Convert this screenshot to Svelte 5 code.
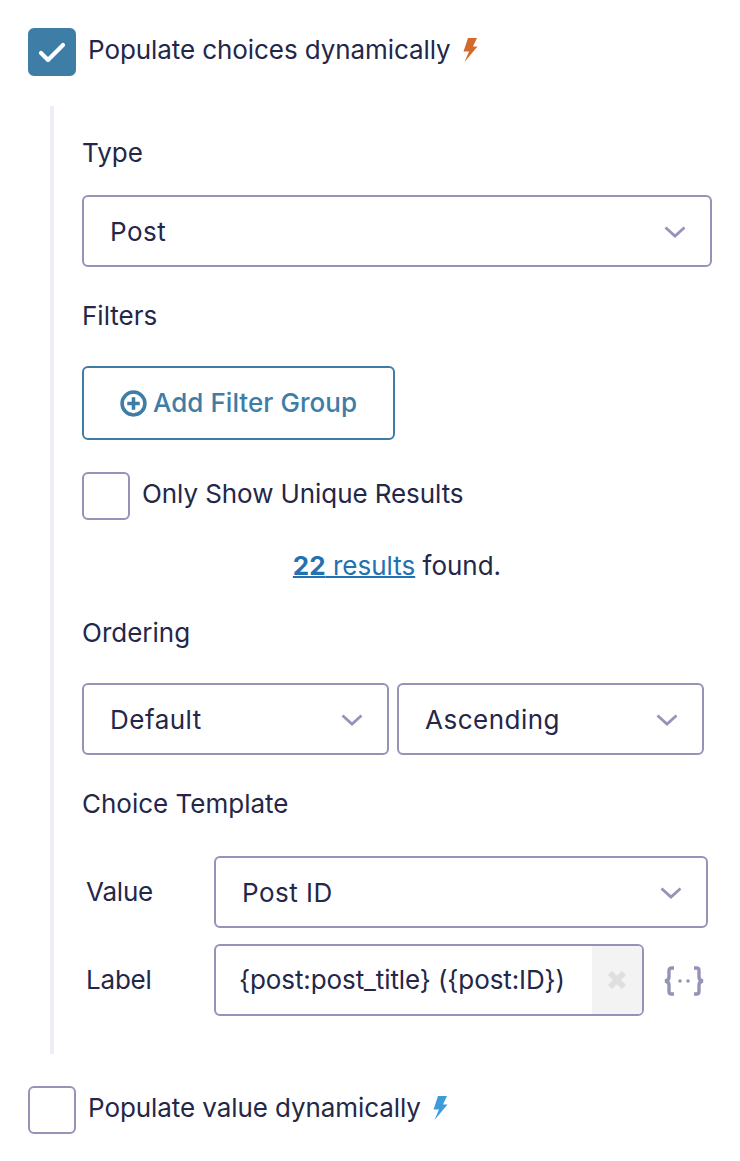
<script>
  const bolt = "M6 0H15L11 8.500H15.500L2.500 24 7 13.500H1.500Z";
</script>

{#snippet chevron()}
  <svg class="chev" width="22" height="12" viewBox="0 0 22 12"><path d="M1.500 1.500 11 10l9.500-8.500" fill="none" stroke="currentColor" stroke-width="2.800" /></svg>
{/snippet}

<main class="page">
  <div class="check-row top">
    <span class="box checked">
      <svg width="28" height="22" viewBox="0 0 28 22"><path d="M3 12l7 7L25 4" fill="none" stroke="#fff" stroke-width="4.200" stroke-linecap="round" stroke-linejoin="round" /></svg>
    </span>
    <span class="text">Populate choices dynamically</span>
    <svg class="bolt" width="17" height="24" viewBox="0 0 17 24"><path d={bolt} fill="#d2692f" /></svg>
  </div>

  <section class="settings">
    <div class="label first">Type</div>
    <div class="select wide"><span>Post</span>{@render chevron()}</div>

    <div class="label filters">Filters</div>
    <button class="add">
      <svg width="27" height="27" viewBox="0 0 26 26"><circle cx="13" cy="13" r="11" fill="none" stroke="currentColor" stroke-width="3.400" /><path d="M13 7v12M7 13h12" stroke="currentColor" stroke-width="3.400" /></svg>
      Add Filter Group
    </button>

    <div class="check-row unique">
      <span class="box"></span>
      <span class="text">Only Show Unique Results</span>
    </div>

    <div class="results"><a href="#results"><b>22</b> results</a> found.</div>

    <div class="label ordering">Ordering</div>
    <div class="order-row">
      <div class="select half"><span>Default</span>{@render chevron()}</div>
      <div class="select half"><span>Ascending</span>{@render chevron()}</div>
    </div>

    <div class="label template">Choice Template</div>
    <div class="tpl-row">
      <span class="tpl-label">Value</span>
      <div class="select value"><span>Post ID</span>{@render chevron()}</div>
    </div>
    <div class="tpl-row second">
      <span class="tpl-label">Label</span>
      <div class="input">
        <span class="input-text">{"{post:post_title} ({post:ID})"}</span>
        <span class="clear">
          <svg width="20" height="20" viewBox="0 0 20 20"><path d="M3 3l14 14M17 3L3 17" stroke="#dfdfdf" stroke-width="5.800" /></svg>
        </span>
      </div>
      <svg class="merge" width="40" height="30" viewBox="0 0 40 30" fill="none" stroke="#9594b8" stroke-width="3.400">
        <path d="M10 2H7.500Q5 2 5 4.500V11Q5 14.500 1 15 5 15.500 5 19V25.500Q5 28 7.500 28H10" />
        <path d="M30 2H32.500Q35 2 35 4.500V11Q35 14.500 39 15 35 15.500 35 19V25.500Q35 28 32.500 28H30" />
        <circle cx="16" cy="15" r="1.800" fill="#9594b8" stroke="none" />
        <circle cx="24" cy="15" r="1.800" fill="#9594b8" stroke="none" />
      </svg>
    </div>
  </section>

  <div class="check-row bottom">
    <span class="box"></span>
    <span class="text">Populate value dynamically</span>
    <svg class="bolt" width="17" height="24" viewBox="0 0 17 24"><path d={bolt} fill="#3e9ad9" /></svg>
  </div>
</main>

<style>
  :global(body) {
    background: #fff;
  }

  .page {
    padding: 28px 0 27px 28px;
    font-family: Inter, "Liberation Sans", sans-serif;
    font-size: 26px;
    line-height: 36px;
    font-weight: 400;
    color: #242748;
  }

  .check-row {
    display: flex;
    align-items: center;
    gap: 12px;
  }

  .check-row .text {
    margin-bottom: 4px;
    letter-spacing: -0.08px;
  }

  .box {
    box-sizing: border-box;
    flex: none;
    display: flex;
    align-items: center;
    justify-content: center;
    width: 48px;
    height: 48px;
    border: 2px solid #9594b8;
    border-radius: 6px;
  }

  .box.checked {
    background: #3e7da6;
    border-color: #3e7da6;
  }

  .bolt {
    margin-left: -1px;
    margin-bottom: 4px;
  }

  .settings {
    box-sizing: border-box;
    width: 662px;
    margin: 30px 0 32px 22px;
    padding-left: 28px;
    border-left: 4px solid #ecedf8;
    height: 948px;
  }

  .label.first {
    padding-top: 29px;
  }

  .select {
    box-sizing: border-box;
    display: flex;
    align-items: center;
    justify-content: space-between;
    height: 72px;
    padding: 2px 24px 0 26px;
    border: 2px solid #9594b8;
    border-radius: 6px;
    background: #fff;
    letter-spacing: 0.5px;
  }

  .chev {
    color: #9594b8;
  }

  .wide {
    width: 630px;
    margin-top: 24px;
  }

  .filters {
    margin-top: 31px;
  }

  .add {
    display: flex;
    align-items: center;
    justify-content: center;
    gap: 6px;
    box-sizing: border-box;
    width: 313px;
    height: 74px;
    margin-top: 32px;
    padding: 0;
    border: 2px solid #3e7da6;
    border-radius: 6px;
    background: #fff;
    color: #3e7da6;
    font: inherit;
    font-weight: 450;
    letter-spacing: 0.05px;
  }

  .unique {
    margin-top: 32px;
  }

  .results {
    margin-top: 28px;
    width: 630px;
    text-align: center;
  }

  .results a {
    color: #2271b1;
    text-decoration: underline;
    text-decoration-thickness: 2px;
  }

  .ordering {
    margin-top: 31px;
  }

  .order-row {
    display: flex;
    gap: 8px;
    margin-top: 32px;
  }

  .half {
    width: 307px;
  }

  .template {
    margin-top: 31px;
  }

  .tpl-row {
    display: flex;
    align-items: center;
    margin-top: 34px;
  }

  .tpl-row.second {
    margin-top: 16px;
  }

  .tpl-label {
    width: 128px;
    padding-left: 4px;
    flex: none;
    letter-spacing: -0.2px;
  }

  .value {
    width: 494px;
  }

  .input {
    box-sizing: border-box;
    display: flex;
    align-items: stretch;
    width: 430px;
    height: 72px;
    border: 2px solid #9594b8;
    border-radius: 6px;
    overflow: hidden;
  }

  .input-text {
    flex: 1;
    display: flex;
    align-items: center;
    padding-left: 23px;
    font-size: 26px;
    white-space: nowrap;
    letter-spacing: -0.1px;
  }

  .clear {
    flex: none;
    display: flex;
    align-items: center;
    justify-content: center;
    width: 50px;
    background: #f3f3f3;
  }

  .merge {
    margin: 2px 0 0 20px;
  }
</style>
